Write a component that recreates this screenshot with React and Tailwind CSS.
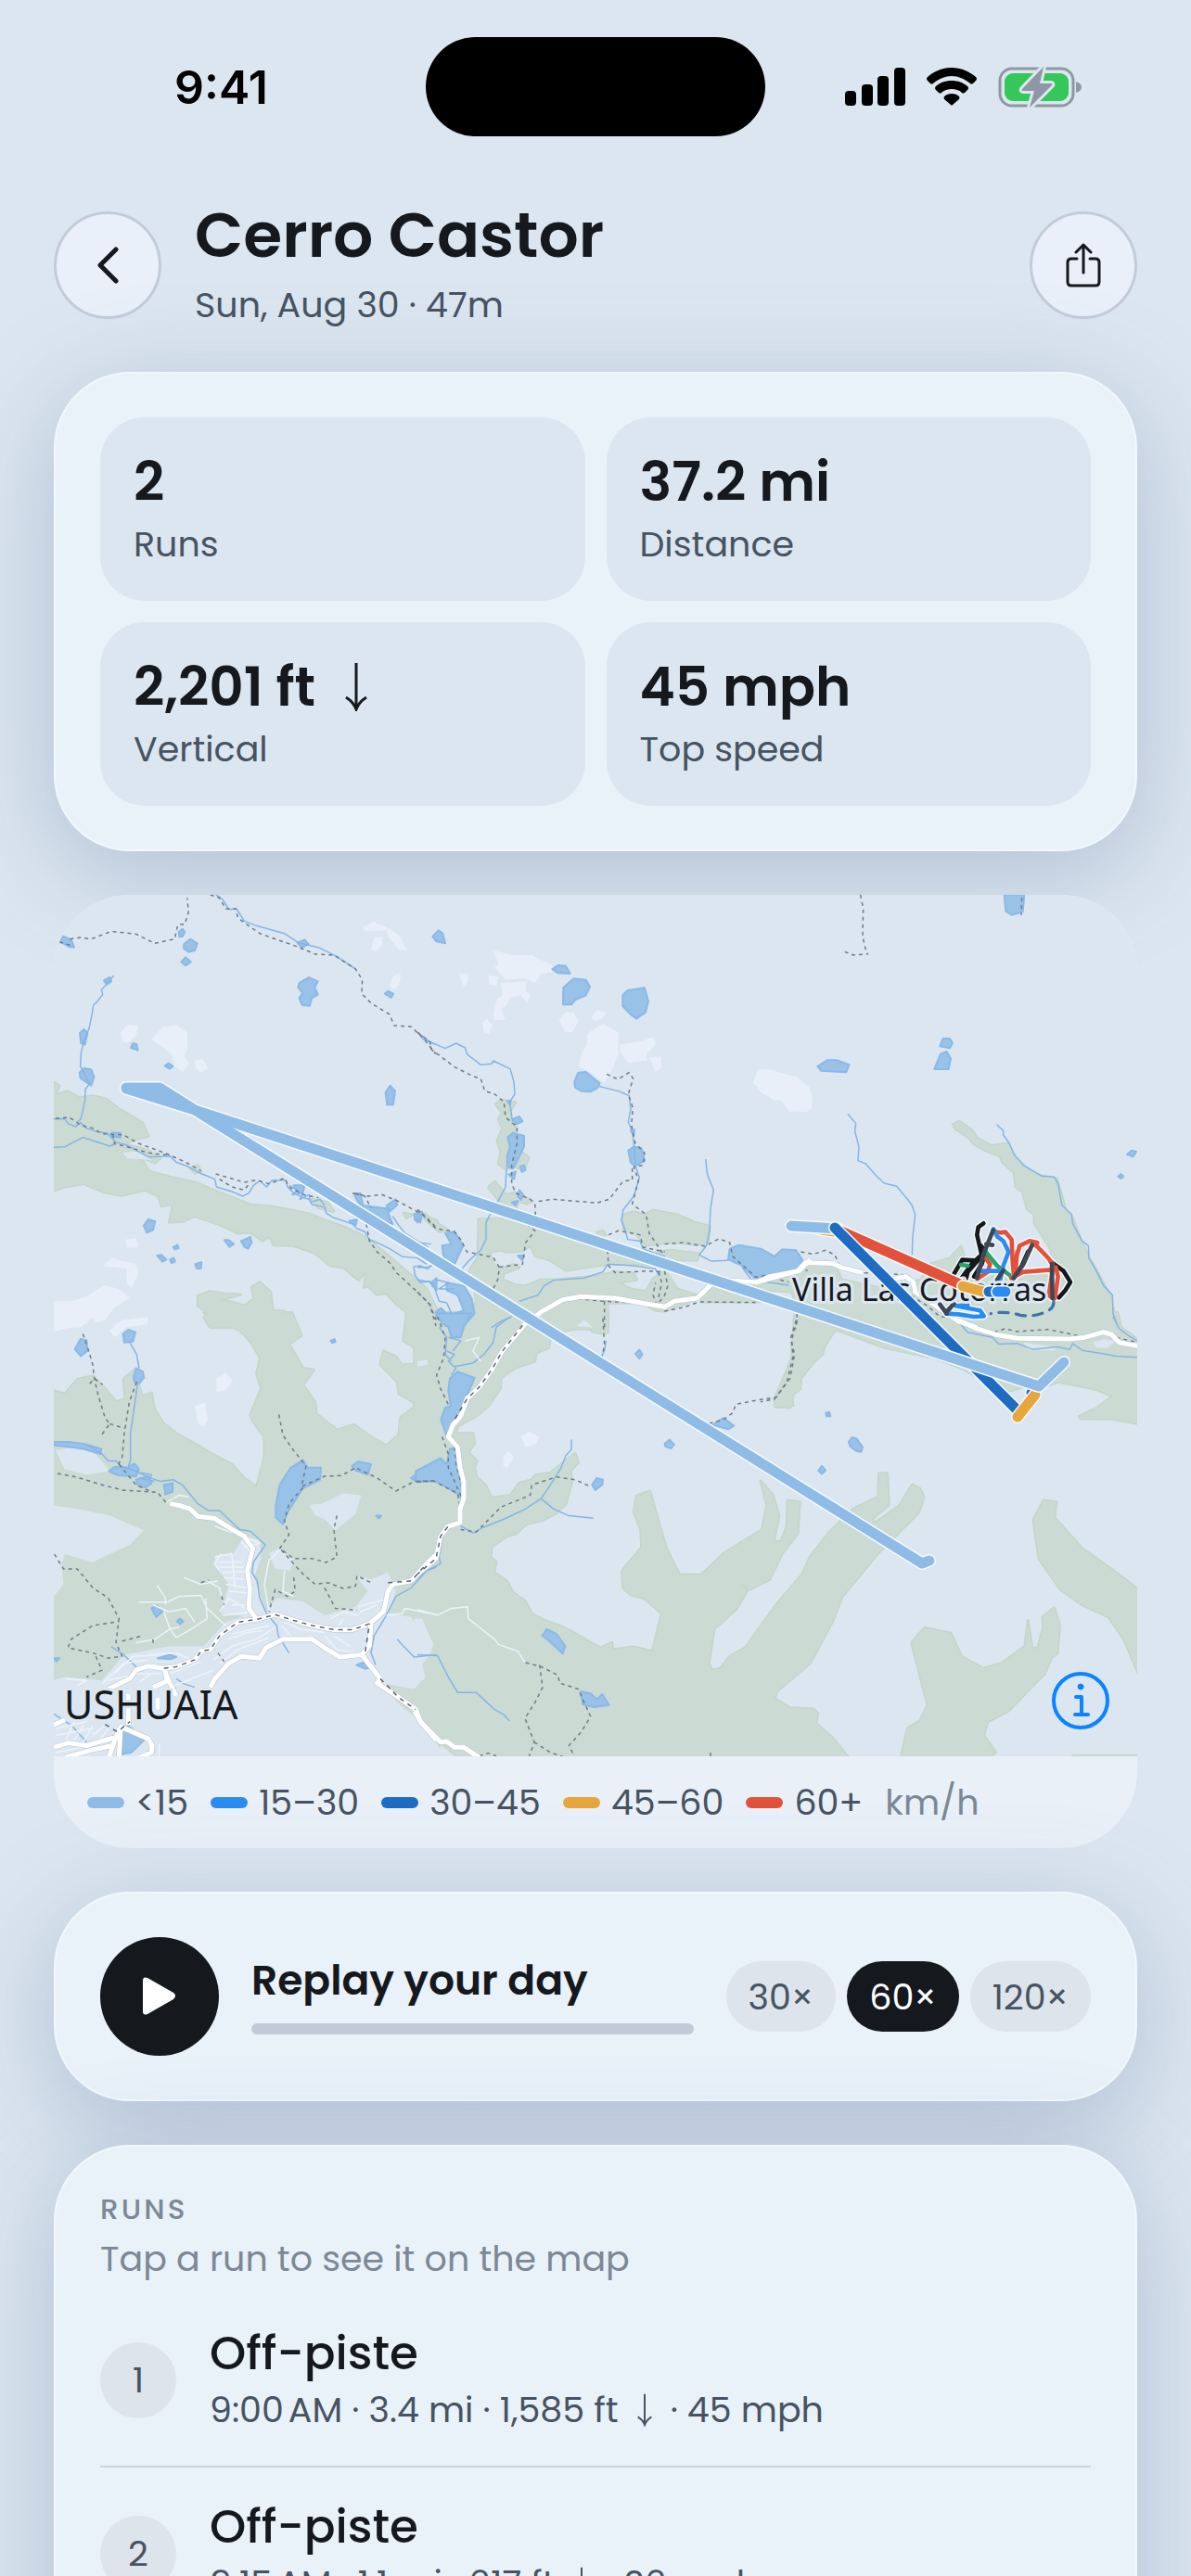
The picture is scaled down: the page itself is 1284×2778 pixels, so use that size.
import React, { useState } from 'react';

const stats = [
  { value: '2', label: 'Runs' },
  { value: '37.2 mi', label: 'Distance' },
  { value: '2,201 ft', label: 'Vertical', down: true },
  { value: '45 mph', label: 'Top speed' },
];

const legend = [
  { label: '<15', color: 'bg-[#8fbce6]' },
  { label: '15–30', color: 'bg-[#2a8cf0]' },
  { label: '30–45', color: 'bg-[#1e6dc3]' },
  { label: '45–60', color: 'bg-[#e6a63c]' },
  { label: '60+', color: 'bg-[#e2523b]' },
];

const runs = [
  { id: 1, name: 'Off-piste', start: '9:00\u202fAM · 3.4 mi · 1,585 ft', speed: '45 mph' },
  { id: 2, name: 'Off-piste', start: '9:15\u202fAM · 1.1 mi · 617 ft', speed: '26 mph' },
];

const speeds = ['30×', '60×', '120×'];

// Each tile draws in its own units and is placed on the map by its transform.
const tiles = [
  {
    transform: 'translate(50 950) scale(.3333)',
    forest:
      'M20 648L42 664 28 692 70 681 108 702 150 695 192 705 232 736 265 755 312 784 330 826 290 836 250 850 330 872 368 898 350 912 318 898 290 888 244 878 248 890 312 905 332 940 400 958 480 975 540 1000 604 1025 660 1048 722 1052 790 1065 852 1078 900 1098 960 1118 1024 1148 1080 1190 1150 1250 1230 1320 1270 1400V1445H1185L1168 1410 1160 1390 1132 1370 1100 1335 1068 1338 1040 1310 1028 1315 1035 1258 1010 1292 962 1252 918 1245 870 1205 800 1180 735 1178 722 1150 700 1165 660 1138 620 1140 560 1112 480 1085 440 1102 397 1104 410 1045 372 1052 362 1020 320 1000 242 1018 180 1005 122 980 60 990 20 1003ZM490 1342L530 1328 580 1336 628 1338 560 1358 600 1362 640 1375 672 1352 664 1315 690 1298 725 1330 733 1390 768 1392 750 1425 800 1445H530L510 1412 525 1398 490 1375ZM465 930L490 920 500 940 480 945ZM860 1030L910 1040 930 1070 880 1058ZM1155 1075L1185 1080 1165 1090ZM1225 1085L1265 1100V1120Z',
    clear: 'M246 880L300 874 340 904 300 900 262 898Z',
    snow:
      'M1022 150L1060 132 1100 150 1140 175 1168 225 1140 222 1105 180 1100 160 1030 162ZM1050 220L1062 182 1085 182 1088 205 1065 230ZM1110 345L1120 310 1145 295 1145 320 1130 350ZM240 492L262 464 298 468 290 500 262 526 248 520ZM340 512L375 474 420 466 455 490 456 545 445 565 462 590 440 620 415 600 405 560 385 545ZM480 580L505 576 522 605 500 620 482 605ZM256 1160L290 1155 298 1185 262 1188ZM184 1246L215 1218 240 1230 285 1236 300 1265 275 1318 258 1300 262 1255ZM20 1360L80 1360 130 1345 185 1308 235 1320 270 1350 220 1380 190 1420 160 1430 150 1410 110 1445 20 1450ZM215 1440L250 1420 330 1415 325 1432 270 1440Z',
    lakes:
      'M45 195L52 178 80 190 90 215 70 212ZM428 165L440 155 448 165 440 180 430 180ZM445 205L465 188 488 202 480 225 460 230 444 218ZM436 262L450 247 467 262 450 274ZM186 322L205 312 210 325 195 335ZM108 492L122 480 133 492 125 530 112 525ZM107 620L122 606 145 610 154 635 145 662 110 638ZM273 540L280 526 292 528 296 548ZM383 598L395 590 410 600 398 608ZM812 200L835 190 848 205 825 216ZM818 330L848 312 878 325 868 345 878 368 858 380 852 404 828 402 818 380 828 362 814 345ZM1095 365L1105 357 1122 365 1115 378ZM1250 180L1262 168V195ZM1097 685L1112 662 1128 680 1122 724 1102 724ZM315 1115L330 1095 352 1102 345 1130 325 1138ZM358 1212L372 1210 388 1225 375 1232ZM400 1225L412 1220 416 1232 404 1236ZM410 1185L424 1178 428 1188 415 1192ZM482 1240L502 1234 500 1254 486 1254ZM576 1162L590 1162 606 1175 592 1184ZM630 1165L660 1152 664 1170 652 1190 640 1184ZM800 985L835 985 830 1010 808 1005ZM995 1012L1015 1010 1025 1050 1100 1060 1120 1110 1085 1100 1040 1075 1005 1035ZM1100 1050L1130 1030 1135 1048 1110 1070ZM1190 1078L1215 1070 1210 1105 1192 1098ZM210 815L240 815 240 830 212 828ZM980 1100L1005 1095 1000 1115ZM1245 1300L1262 1285V1325Z',
    rivers:
      'M218 306L190 340 178 352 182 368 160 395 152 402 148 430 138 478 120 520 112 560 110 600 140 655 126 675 125 710 112 770 100 780M20 770L60 770 70 785 95 795 110 782 130 800 165 812 195 815 225 845 260 855 330 893 400 890 420 910 460 925 490 942 520 955 545 965 550 990 600 1005 635 1020 655 1010 670 985 690 970 712 990 730 968 775 968 780 990 800 1010 830 1025 850 1030 860 1048 900 1055 905 1075 930 1090 960 1100 990 1110 1005 1125 1030 1135 1045 1160 1080 1175 1110 1190 1150 1215 1200 1220 1230 1240M24 862L60 860 118 830 150 840 205 858 225 850M548 44L570 60 590 92 615 90 640 130 680 145 770 170 815 200 880 215 940 245 1000 285M1120 1085L1140 1115 1160 1140 1200 1165 1235 1185M1188 1248L1210 1245 1232 1256 1245 1245M1188 1248L1192 1275 1210 1300 1240 1295 1250 1315M1215 510L1260 530M785 985L815 1000 795 1015 830 1010 820 1030 850 1015 855 1040 885 1030 900 1050',
    trails:
      'M42 198L85 210M76 188L110 183 145 188 210 163 290 172 350 202 415 188 425 142 448 140 460 100 455 55M530 45L560 55 580 90 612 90 620 120 650 142 690 170 760 195 810 212 870 237 930 240 1000 285 1022 320 1020 365 1050 395 1110 432 1125 468 1180 472 1220 510 1260 560M30 768L75 765 110 790 150 800 180 818 250 822 300 850 350 868 395 885 450 910 500 938M215 820L220 850 260 860 330 880 400 888M548 948L640 975 680 968 720 980 770 962 785 990 830 1015 880 1025M560 965L600 990 640 1000 660 975M990 1010L1040 1020 1085 1015 1135 1035 1190 1065 1220 1080 1260 1120M1000 1012L1030 1020 1050 1058M1035 1110L1045 1165 1070 1200 1110 1235 1135 1270 1200 1330 1240 1370 1260 1420',
  },
  {
    transform: 'translate(450 950) scale(.3333)',
    forest:
      'M252 722L275 708 318 716 300 745 302 790 322 800 292 835 290 900 305 930 282 930 262 915 270 880 258 840 275 800 262 770 275 750ZM325 905L342 880 360 895 345 935 315 925ZM230 992L250 972 272 998 285 1015 320 1008 372 1036 355 1044 325 1035 320 1065 262 1032ZM198 1095L330 1090 560 1165 780 1222 775 1245 720 1240 620 1240 480 1260 430 1228 380 1212 365 1180 340 1198 290 1200 270 1195 232 1200 250 1250 285 1250 310 1240 330 1250 280 1270 275 1290 320 1308 350 1310 400 1290 450 1290 580 1278 640 1265 700 1270 710 1290 650 1300 690 1320 740 1328 760 1290 800 1262 820 1290 840 1320 905 1340 900 1355 800 1392 770 1390 730 1366 615 1366 616 1450H150L190 1360 185 1320 160 1300 168 1260 195 1220ZM665 1080L700 1070 735 1080 762 1065 840 1080 900 1105 946 1118 940 1172 900 1178 830 1168 795 1172 740 1180 705 1140 668 1130ZM775 1200L820 1195 910 1205 905 1228 780 1225ZM580 1138L600 1132 610 1145 592 1150ZM918 1350L960 1310 1000 1320 1108 1362 920 1362ZM1090 1310L1190 1282 1265 1278V1300L1180 1312 1100 1325ZM20 1075L60 1105 100 1130 70 1135 20 1090ZM-5 1325L40 1390 70 1450H-5Z',
    clear: 'M515 1440L540 1420 568 1445Z',
    snow:
      'M245 225L310 240 370 240 440 275 435 295 400 300 380 330 345 315 285 320 250 280 262 270ZM270 330L355 325 350 355 364 370 355 395 335 370 300 378 290 400 270 415 285 450 250 450 245 430 255 385 275 370ZM230 305L262 310 255 340 232 335ZM135 300L165 300 165 320 150 346ZM210 460L225 446 242 468 232 494 215 490ZM458 450L480 425 505 425 520 455 500 490 480 490ZM562 440L580 418 610 425 600 445 572 452ZM548 495L600 462 650 490 650 560 630 610 605 655 560 620 522 600 530 560 548 530ZM655 530L720 520 765 505 770 530 740 560 745 580 680 588 655 550ZM750 570L788 568 790 605 770 618ZM1085 655L1100 615 1130 610 1210 630 1262 665V748L1205 745 1175 710 1150 708Z',
    lakes:
      'M50 180L68 160 82 170 90 202 60 195ZM436 285L455 273 480 275 494 300 455 298ZM472 345L505 316 545 320 558 342 545 370 510 385 498 400 471 400ZM664 370L680 354 735 346 747 390 738 425 708 446 690 432 664 405ZM508 650L520 620 545 618 590 655 582 670 560 682 530 680 510 668ZM682 872L700 860 725 865 735 905 705 922 690 912ZM310 770L330 762 340 778 318 788ZM292 830L310 815 345 825 345 860 325 900 310 930 290 925 290 890 300 860ZM332 925L345 920 350 935 338 942ZM305 1040L325 1035 318 1050ZM330 1000L342 1015 335 1032 325 1020ZM1010 1190L1040 1178 1110 1190 1155 1215 1180 1192 1225 1195 1245 1225 1232 1262 1170 1275 1090 1285 1050 1245 1005 1225ZM90 1140L120 1135 148 1180 120 1240 85 1220 80 1180 110 1175ZM0 1075L15 1080 0 1105ZM60 1395L75 1382 90 1395 82 1420 62 1415ZM95 1300L150 1310 175 1350 185 1400 150 1440H90L120 1400 150 1390 130 1340 95 1325ZM325 1212L345 1212 340 1228ZM295 950L318 940 312 965ZM690 808L702 805 700 825ZM290 712L302 712 300 724Z',
    rivers:
      'M0 490L40 520 90 542 125 525 155 540 160 560 205 595 240 592 245 582 300 608 312 650 315 690 298 715 308 780M288 930L285 990 262 1035 232 1085 222 1105 222 1160 205 1195 165 1230 145 1255M588 665L650 680 685 695 690 740 682 780 695 810 700 850 705 920 718 960 700 1020 665 1065 660 1100 672 1130 680 1160 720 1165 730 1190 770 1205 800 1215M932 900L938 950 958 1000 948 1060 945 1130 935 1180 912 1210 950 1230 1005 1228M615 1240L600 1265 540 1285 440 1292 410 1310 390 1340 330 1360M305 1410L270 1425 240 1445M0 1250L30 1250 60 1240M615 1240L700 1245 770 1255 780 1275M0 1290L50 1300 60 1330 70 1360 95 1365 110 1400M1050 1250L1080 1290 1200 1308M0 1170L45 1175M60 1290L100 1300 70 1320 120 1320',
    trails:
      'M0 490L40 520 45 545 120 602 180 632 205 640 218 680 250 690 280 715 285 765 322 795 322 850 305 920 305 980 318 1010 365 1030 380 1045 382 1080M612 625L648 642 685 620 698 640 682 690 697 735 692 790 705 850 735 880 730 920 700 925 715 970 695 1045 740 1080 750 1140 800 1215M695 930L695 968 665 972 620 1030 580 1042 440 1030 380 1038M618 1145L650 1132 720 1145 730 1185 800 1200M615 1195L618 1245 640 1268 740 1262 800 1265 810 1310 800 1340 775 1372 762 1340 770 1300M800 1175L860 1170 930 1182 975 1158 1010 1170 1020 1215 1095 1282 1190 1265 1262 1260M355 1110L380 1132 350 1170 340 1240 265 1250 260 1290 245 1320M265 1250L245 1218 160 1200 140 1160 120 1135 60 1125 0 1062M385 1400L470 1360 520 1352 600 1360 770 1368 800 1392 860 1380 912 1362 1100 1364M605 1360V1450M1228 1400L1225 1450M780 1265L790 1300 780 1350M1150 1285L1200 1298M0 1330L40 1370 60 1440',
    roads: 'M340 1440L400 1395 470 1355 530 1345 640 1350 740 1368 800 1378 830 1360 905 1350 950 1305 990 1292 1100 1298 1140 1280 1235 1262 1270 1225',
  },
  {
    transform: 'translate(820 950) scale(.3333)',
    forest:
      'M622 788L642 778 682 805 700 832 745 856 800 850 822 892 870 938 910 955 958 962 990 1072 1005 1080 1040 1170 1060 1215 1088 1262 1130 1340 1158 1450H110L122 1380 100 1330 0 1322V1300L100 1272 150 1242 240 1242 262 1290 400 1320 520 1290 552 1238 612 1222 648 1182 658 1215 680 1270 880 1280 950 1250 938 1190 885 1108 885 1078 862 1062 848 1005 825 990 820 945 782 910 775 890 740 878 690 852 672 830 630 802Z',
    snow: 'M-10 610L40 612 80 630 115 632 160 670 168 710 165 738 95 748 65 708 20 695-10 678Z',
    lakes:
      'M788 44H853L848 100 812 110 793 98ZM580 535L590 510 612 510 621 525 612 541ZM562 609L582 560 602 552 615 575 608 609ZM184 600L215 580 245 580 286 595 277 619 195 614ZM1185 885L1200 872 1215 876 1205 892ZM1156 956L1165 948 1174 956 1166 964Z',
    rivers:
      'M282 754L308 785 305 810 318 860 315 905 340 915 375 955 400 978 440 988 475 1030 490 1050 500 1080 492 1150 490 1210M763 788L785 808 785 822 805 850 820 885 850 920 910 955 950 958 962 980 975 1050 1005 1078 1010 1110 1040 1165 1060 1180 1062 1220 1085 1260 1110 1310 1138 1340 1140 1400 1155 1440',
    trails:
      'M323 45L332 90 330 180 342 230 348 238M272 229L300 240 348 236M845 55L843 110M130 1200L170 1208 210 1195 240 1210 258 1250 330 1268 400 1270 470 1275 500 1300 490 1345 540 1375 580 1410 610 1412',
    roads: 'M-20 1300L120 1262 145 1235 235 1238 260 1250 330 1268 M420 1290L470 1280 495 1300 500 1330 560 1370 640 1425 700 1445',
  },
  {
    transform: 'translate(50 1420) scale(.3333 .37)',
    forest:
      'M510-12H795L825 55 785 80 830 150 865 155 830 200 870 250 872 282 940 330 995 315 1050 350 1100 375 1140 345 1145 295 1200 255 1140 225 1135 190 1080 140 1090 100 1130 115 1150 140 1190 138 1235 130 1210 100 1155 70 1165-12H1270V1290H20V215L60 225 100 182 150 172 190 210 225 248 255 240 250 180 285 155 310 232 340 222 350 270 380 312 420 340 480 370 540 402 600 430 640 470 680 495 705 410 705 350 668 305 660 285 695 210 680 165 692 120 665 80 640 50 580 15Z',
    clear:
      'M20 550L100 560 205 580 315 622 270 665 190 698 150 716 60 692 50 720 55 780 20 820ZM850 548L890 545 960 515 1018 520 1000 575 935 622 900 590 870 580ZM720 690L750 675 800 705 790 740 740 735ZM30 390L100 378 160 400 205 450 130 460 60 445ZM20 1060L60 1050 180 1060 250 985 400 960 510 960 580 890 640 872 565 865 590 780 540 720 550 695 605 690 640 640 690 650 695 700 672 760 712 860 745 820 830 830 900 870 1000 845 1040 800 1000 755 1050 765 1105 745 1130 800 1110 865 1180 875 1220 930 1245 950 1215 1010 1225 1050 1190 1085 1100 1070 1130 1120 1210 1180 1275 1260V1300H20Z',
    snow: 'M550 180L580 162 602 185 580 215 550 218ZM480 260L512 250 522 300 510 322 490 310ZM20-10H150L130 20 80 30 20 45ZM205 40L250 10 330 0 325 22 260 30 220 60Z',
    lakes:
      'M92 95L110 65 130 68 132 100 112 115ZM248 50L265 38 288 45 280 72 252 75ZM282 175L290 150 312 160 316 178 300 195 285 190ZM20 365H70L120 370 178 385 175 400 120 385 60 378 20 375ZM202 450L220 438 260 440 285 428 300 445 290 465 230 462ZM290 475L330 465 340 485 320 498 295 490ZM380 490L408 485 408 510 385 518ZM742 550L755 490 790 440 830 418 845 440 888 440 885 475 830 500 780 570 765 605 742 585ZM988 435L1010 422 1050 430 1040 460 1000 448ZM1180 470L1200 455 1262 435V478L1200 482ZM340 850L358 842 375 860 355 875ZM422 888L432 880 443 888 432 895ZM245 1275L240 1200 265 1192 318 1232 275 1270ZM1003 1015L1025 1008 1058 1022 1030 1026ZM360 995L400 985 420 992 400 998ZM24 995L42 995 32 1005ZM920 70L932 65 935 73 925 76ZM1066 580L1082 580 1076 588Z',
    rivers:
      'M268 72L292 110 300 150M295 195L285 260 272 340 272 420 265 435M130 372L180 400 200 420 225 420 240 435 290 450 330 468 370 480 410 475 440 490 490 545 525 565 560 565 625 620 660 625 708 665 670 715 665 745 682 770 690 820 712 865 745 900 750 930 785 980M1262 730L1230 740 1180 790 1130 815 1100 870 1060 930 1050 980 1065 1015M1135 940L1155 960 1190 992 1262 985M210 962L250 985 290 1020M420 1055L445 1070 480 1080M24 1158L80 1190 130 1240M300 455L340 460 330 480M300 470L350 480',
    trails:
      'M118 50L132 85 150 140 155 180 168 230 190 295 205 312 190 330 175 350M205 312L252 325M140 195L155 180 182 198M292 190L268 250 252 340 245 410 230 435M36 457L100 468 180 490 250 506 360 512 390 545M235 430L290 490 345 512M752 285L765 345 800 390 840 435 825 495 900 465 955 463 1000 440 1070 470 1130 508 1190 480 1262 478M830 498L785 545 770 595 785 635 755 675 800 705 860 705 905 716 940 700 930 620 942 570M760 680L830 750 870 780 910 775 960 792 1000 785 1005 755 1050 775M900 790L935 850 1005 855M800 760L805 800 780 815 740 795 720 860M26 692L55 735 100 735 150 790 200 820 235 880 225 950 245 990 200 995 150 980 70 965 80 940 150 900 235 888M160 990L180 1030 130 1050M245 945L310 930M555 980L575 1005M570 825L565 810 575 840M500 775L525 768M345 940V960',
    streets:
      'M300 832L390 832 430 815 500 812 520 850 580 900M358 782L385 820 385 838M445 760L500 780 555 770M380 860L400 910 420 935 470 910 520 880 515 820M345 840L395 860 450 850 480 890M290 950L350 940 400 910 430 905M545 700L600 690 610 790M560 715H630M560 730H640M570 745L650 742M575 760L640 765M580 780L650 790M590 800L650 805M560 860L590 820 660 860M600 840L650 840M570 870L650 862M565 690L545 720 560 740M520 770L560 790 570 830M540 1000L600 960 680 940 740 905M560 1010L620 970 720 935M590 940L650 920 700 915M600 925L720 900M760 900L800 940 860 930M770 890L820 910 900 920M900 930L940 970 1000 980M930 930L980 960M920 880L960 860 1010 870M1010 845L1090 825M1015 860L1070 840M940 910L960 880M720 860L705 780 720 710 755 680M770 740L765 800 800 815M1100 870L1150 865 1160 850 1262 868M180 1070L250 1010 330 1000M200 1060L300 1040 370 1040M220 1040L280 990 370 985M330 985L420 980 470 1000M300 1065L340 1040M400 1040L500 1005M415 1075L540 1030M60 1055L130 1060 100 1075M30 1200L130 1180M30 1220L150 1200M60 1240L90 1180M90 1235L120 1190M120 1240L150 1190M150 1220L190 1190M160 1250L200 1200M30 1270L200 1240M365 1245V1285M640 640L690 660 640 670M545 610L600 630M630 655L665 690M390 540L430 520 460 525',
    roads:
      'M400 545L430 550 465 560 490 582 545 588 600 620 640 640 668 675 650 740 658 790 655 850 680 882M380 1025L420 1020 480 1000 500 975 530 970 560 930 620 890 680 882 740 868 800 885 860 900 930 912 990 912 1045 895 1090 860 1105 800 1120 780 1180 770 1230 720 1265 690M530 1080L545 1055 590 1010 630 990 690 995 710 965 765 940 860 940 900 965 950 992 1020 985 1045 960 1050 895M1020 985L1080 1055 1070 1068 1140 1110 1195 1145 1210 1180 1262 1235M200 1085L270 1055 290 1030 330 1018 380 1025 395 1060 420 1105M345 1080L390 1062 385 1035M24 1255L70 1242 130 1250 225 1225 240 1195 330 1230 342 1250 340 1270 300 1285M60 1285L150 1262 215 1250M225 1225L200 1290M240 1195L235 1285M24 1190L60 1175M265 1100V1190M360 1110V1145',
    dotted: 'M380 1025L420 1020 480 1000 500 975 530 970 560 930 620 890 680 882 740 868 800 885 860 900 930 912 990 912 1045 895 1030 985M1080 1055L1140 1110 1195 1145M1105 775L1180 770 1230 720M190 1188L230 1210 270 1180',
  },
  {
    transform: 'translate(450 1420) scale(.3333 .37)',
    forest:
      'M-10-12H616V45L590 48 565 42 570 25 545 18 500 38 470 42 430 65 425 90 385 105 380 130 320 148 290 165 270 180 268 210 230 260 190 290 130 320 125 340 180 340 185 370 165 395 192 420 185 440 190 465 220 490 240 528 300 520 330 485 370 475 380 462 430 455 510 398 520 425 495 450 500 480 480 545 450 572 400 595 350 605 320 632 290 640 240 670 238 700 255 715 248 745 290 770 310 805 350 830 370 865 410 885 460 900 500 918 590 965 630 950 630 970 700 962 760 975 790 865 735 822 690 810 665 790 662 740 725 672 722 620 700 570 708 522 752 508 805 675 848 752 918 752 990 690 1115 620 1130 550 1110 478 1150 520 1170 580 1152 655 1175 655 1195 612 1197 535 1237 540 1230 632 1180 690 1140 765 1075 795 1045 780 1065 800 1032 852 960 910 943 1010 953 1030 980 1025 1010 990 1060 965 1160 840 1245 750 1270 700 1330 630 1410 560 1490 525 1493 457 1520 457 1525 548 1470 590 1482 600 1560 550 1600 490 1625 500 1638 525 1622 570 1490 690 1375 815 1342 890 1270 1010 1165 1090 1155 1112 1205 1140 1280 1143 1295 1155 1290 1185 1340 1225 1400 1290H140L60 1230 0 1175-10 1160ZM1228-10L1212 120 1155 240 1158 262 1205 265 1215 235 1212 222 1240 200 1240 180 1275 140 1300 110 1350 40V-10Z',
    clear: 'M-10 880H15L52 955 40 985 10 1020 25 1055-10 1075ZM0 130L30 125 35 140 0 145Z',
    snow: 'M335 350L360 335 395 350 385 370 350 380ZM278 410L295 390 312 410 290 440 278 435Z',
    lakes:
      'M60-10H175L150 30 140 60 110 60 100 30 80 20ZM105 180L130 160 185 178 165 220 150 270 120 300 95 350 76 300 90 265 108 260 100 215ZM105 385L125 380 145 450 145 530 120 510 60 480-5 478V450L75 412 95 430ZM565 490L580 470 600 475 598 490 575 505ZM800 370L815 358 830 372 820 384 802 378ZM705 108L718 96 728 110 718 122ZM955 315L990 295 1024 318 1005 328ZM404 930L418 910 450 925 478 960 470 982 420 940ZM528 1092L560 1098 580 1115 598 1100 620 1132 570 1138 535 1130Z',
    rivers:
      'M300 0L255 30 245 75 215 110 180 135 120 145M498 358L498 388 480 405 465 440 430 490 400 530 350 560 280 590 210 615 180 630 140 610M400 530L440 560 490 580 570 587M95 100L120 110 100 130 125 150 110 170M85 625L70 700 75 720 20 745 0 770M0 985L65 988 100 1050 130 1095 190 1095 250 1145 280 1160 298 1178M610 70L605 100 595 115M70 30L95 60 90 110 110 130M100 60L140 70 115 100',
    trails:
      'M65 0L90 60 85 120 62 170 75 210 105 265M80 350L100 400 100 440 140 520 140 590M120 380L125 430 145 500M0 482L50 478 130 515 145 590 100 610M140 620L190 628 270 555 365 520 370 490 450 467 510 475 560 495M600 5L605 80 598 115M350 1008L400 1020 455 1045 460 1068 520 1085 560 1165 530 1210 490 1250 510 1285M395 1015L405 1080 380 1125 348 1170 378 1240 360 1285M378 1240L430 1270 480 1285M200 1280L230 1272 255 1280M1228 10L1210 70 1220 110 1205 180 1160 235 1100 243 1030 255 1020 280 990 300 940 312M948 1270V1285',
    streets: 'M0 853L65 870 110 850 162 845 165 880 250 940 262 955 325 975 348 1008M155 70L200 60 180 100 205 130',
    roads: 'M345 25L275 100 240 155 200 205 160 240 140 290 115 315 100 350 130 380 138 440 150 480 150 530 138 560 138 600 98 612 75 640 60 705 0 750M-10 1150L15 1185 75 1240 95 1238 120 1255 150 1255 200 1285',
    dotted: 'M340 25L275 100 240 155 200 205 160 240 120 300M98 612L75 640 60 705 0 750',
  },
  {
    transform: 'translate(820 1420) scale(.3333 .37)',
    forest:
      'M110-12H1155L1165 30 1222 68V225L1140 232 1085 212 1050 205 960 190 930 200 850 205 800 218 790 200 720 185 650 150 560 120 400 90 245 38 210 70 200 110 160 140 125 180 128 210 100 230 105 258 50 262 60 230 100 120ZM453 1290L475 1200 515 1178 540 1132 488 950 530 907 615 922 650 990 720 1025 780 1010 855 960 865 885 878 965 895 968 915 905 912 875 950 848 968 900 960 980 940 995 920 1040 800 1150 735 1180 722 1220 760 1270 730 1290ZM915 535L958 540 950 585 1040 675 1150 745 1222 795V1040L1175 940 1125 875 1040 840 970 795 900 705 882 592ZM1030 290L1090 265 1140 230 1222 225V312L1140 298 1035 297ZM1010 1280H1222V1290H1010Z',
    clear: 'M1075 75L1110 65 1150 70 1120 92 1085 90ZM850 75L960 90 950 98 870 98Z',
    lakes: 'M285 365L295 352 310 355 330 380 325 394 310 392 290 378ZM187 448L198 435 210 448 198 458ZM211 280L222 278 226 290 213 290Z',
    rivers: 'M640 15L670 45 750 60 770 80 830 78 880 95 960 88 1000 95 1010 78 1040 98 1110 108 1150 115 1220 118M1140 0L1160 35 1190 55 1218 70',
    trails: 'M115 10L98 60 105 115 85 190 45 240 0 248M755 45L790 35 830 43 930 37 990 48 1040 58 1110 42 1150 60 1218 75',
    roads: 'M640 10L700 35 760 52 830 63 1000 65 1050 60 1110 45 1135 52 1160 75 1220 85',
  },
];

const layers = [
  ['forest', { fill: 'none', stroke: '#c4d6c8', strokeWidth: 3 }],
  ['forest', { fill: '#cbdad3' }],
  ['clear', { fill: '#dce6f0' }],
  ['snow', { fill: '#e8eff8' }],
  ['lakes', { fill: '#98c2e8', stroke: '#8ab9e8', strokeWidth: 2 }],
  ['rivers', { fill: 'none', stroke: '#83b5e8', strokeWidth: 1.5 }],
  ['streets', { fill: 'none', stroke: '#edf3fa', strokeWidth: 1.5 }],
  ['trails', { fill: 'none', stroke: '#717b87', strokeWidth: 1.5, strokeDasharray: '4 4' }],
  ['roads', { fill: 'none', stroke: '#b9c4d0', strokeWidth: 6 }],
  ['roads', { fill: 'none', stroke: '#ffffff', strokeWidth: 5 }],
  ['dotted', { fill: 'none', stroke: '#59636f', strokeWidth: 1.5, strokeDasharray: '5 5' }],
];

const pistes = [
  ['#15191e', 'M181 58L164 70 160 95 168 130 175 160 195 165M172 130L188 150 175 190 150 230M180 155L155 178 112 176 85 222 M150 180L110 235M165 175L130 215 125 235M398 182L440 212 462 248 445 275 425 298M325 150L305 195 285 225'],
  ['#e2523b', 'M215 84L235 88 252 86 272 110 275 180 280 235M285 175L298 130 330 115 355 120 350 130M350 128L390 170 405 190M285 205L290 150M188 170L202 190 195 215 160 238M270 235L310 215 400 208 M415 200L422 230 412 300M405 200L400 240 392 290 408 303'],
  ['#28a26b', 'M190 152L225 195 265 225M108 192L130 195'],
  ['#2a8cf0', 'M213 76L225 100 245 115 262 150 245 195 235 240M165 212H245M75 330L60 350 100 352 150 360 182 358 170 340 90 325 130 322'],
  ['#3d4854', 'M212 80L180 160 160 235M338 128L310 190 278 235M402 190L404 300M245 210L225 240M40 320L62 350M190 125L210 128M60 345L85 318'],
];

const tracks = [
  ['#e6a63c', 'M885 1326L913 1330'],
  ['#8fbce6', 'M853 1322L903 1325'],
  ['#e2523b', 'M905 1327L1033 1384'],
  ['#e6a63c', 'M1038 1387L1060 1393'],
  ['#1e6dc3', 'M1066 1393H1074'],
  ['#2a8cf0', 'M1075 1393H1084'],
  ['#1e6dc3', 'M900 1324L1096 1520M1117 1497L1112 1502'],
  ['#e6a63c', 'M1097 1528L1116 1504'],
  ['#8fbce6', 'M136 1173H172L210 1197 994 1686 1002 1683M136 1174L210 1197 1120 1495 1147 1469M150 1177L190 1184'],
];

const SkiMap = () => (
  <svg viewBox="58 965 1168 929" className="block w-full" role="img" aria-label="Route map">
    {layers.map(([layer, style], i) => (
      <g key={i} {...style} strokeLinejoin="round">
        {tiles.map((tile) =>
          tile[layer] ? (
            <g key={tile.transform} transform={tile.transform}>
              <path d={tile[layer]} vectorEffect="non-scaling-stroke" />
            </g>
          ) : null
        )}
      </g>
    ))}

    <g transform="translate(1000 1300) scale(.3333)" fill="none" strokeLinecap="round" strokeLinejoin="round">
      {pistes.map(([color, d]) => (
        <path key={color} d={d} stroke="#f4f8fc" strokeWidth="23" />
      ))}
      {pistes.map(([color, d]) => (
        <path key={color} d={d} stroke={color} strokeWidth="14" />
      ))}
      <path d="M408 312Q408 335 380 345Q345 362 300 355Q250 340 205 350" stroke="#3a76ad" strokeWidth="10" strokeDasharray="30 26" />
    </g>

    <g
      className="font-['Noto_Sans',sans-serif]"
      fill="#15191e"
      stroke="#dce6f0"
      strokeWidth="6"
      strokeLinejoin="round"
      paintOrder="stroke"
    >
      <text x="854" y="1403" fontSize="34">Villa Las Cotorras</text>
      <text x="69" y="1854" fontSize="43">USHUAIA</text>
    </g>

    <g fill="none" strokeLinecap="round" strokeLinejoin="round">
      {tracks.map(([color, d]) => (
        <React.Fragment key={d}>
          <path d={d} stroke="#f6fafd" strokeWidth="14" />
          <path d={d} stroke={color} strokeWidth="11" />
        </React.Fragment>
      ))}
    </g>
  </svg>
);

const DownArrow = ({ className }) => (
  <svg viewBox="0 0 24 52" className={className} fill="none" stroke="currentColor" strokeWidth="3" role="img" aria-label="down">
    <path d="M12 0V49M1 37Q9 42 12 50Q15 42 23 37" />
  </svg>
);

const StatusBar = () => (
  <div className="grid grid-cols-[1fr_366px_1fr] items-center pt-10">
    <div className="pl-[188px] text-[50px] leading-none font-semibold text-black font-[Inter,sans-serif]">9:41</div>
    <div className="h-[107px] rounded-full bg-black" />
    <div className="flex items-center gap-[22px] pl-[86px]">
      <svg viewBox="0 0 65 41" className="w-[65px] h-[41px]" fill="#000">
        <rect x="0" y="25" width="12" height="16" rx="4" />
        <rect x="18" y="18" width="12" height="23" rx="4" />
        <rect x="35" y="9" width="12" height="32" rx="4" />
        <rect x="53" y="0" width="12" height="41" rx="4" />
      </svg>
      <svg viewBox="0 0 56 41" className="w-14 h-[41px]" fill="#000">
        <path d="M28 0C38 0 47 4 54 10Q56 12 54 14L51 17Q49 18 48 17C42 12 35 9 28 9S14 12 8 17Q7 18 5 17L2 14Q0 12 2 10C9 4 18 0 28 0Z" />
        <path d="M28 14C35 14 40 16 45 20Q47 22 45 24L42 27Q40 28 39 27C36 24 32 23 28 23S20 24 17 27Q16 28 14 27L11 24Q9 22 11 20C16 16 21 14 28 14Z" />
        <path d="M28 28C31 28 34 29 36 31Q37 32 36 34L29 40Q28 41 27 40L20 34Q19 32 20 31C22 29 25 28 28 28Z" />
      </svg>
      <svg viewBox="0 0 92 44" className="w-[92px] h-11">
        <rect x="2" y="2" width="79" height="40" rx="13" fill="none" stroke="#8e97a3" strokeWidth="3" />
        <rect x="7" y="7" width="69" height="30" rx="9" fill="#34c759" />
        <path d="M84 16Q90 18 90 22T84 28Z" fill="#8e97a3" />
        <path d="M49 0L26 24Q25 26 27 26H39L34 44L58 20Q59 18 57 18H45Z" fill="#8e97a3" stroke="#dce6f0" strokeWidth="6" paintOrder="stroke" />
      </svg>
    </div>
  </div>
);

const Card = ({ className, children }) => (
  <section
    className={`rounded-[82px] border-2 border-[#f2f7fd] bg-[#e9f1f9] shadow-[0_24px_110px_rgba(90,118,155,0.34)] ${className}`}
  >
    {children}
  </section>
);

const App = () => {
  const [speed, setSpeed] = useState('60×');

  return (
    <div className="h-screen overflow-hidden bg-[#dce6f0] text-[#15191e] font-[Poppins,Inter,sans-serif]">
      <StatusBar />

      <header className="flex items-center gap-9 px-[58px] pt-16 pb-10">
        <button aria-label="Back" className="shrink-0 flex items-center justify-center w-[116px] h-[116px] rounded-full border-3 border-[#c2ccd9] bg-[#e9f0f9]">
          <svg viewBox="0 0 24 40" className="w-6 h-10" fill="none" stroke="currentColor" strokeWidth="5" strokeLinecap="round" strokeLinejoin="round">
            <path d="M21 3L4 20L21 37" />
          </svg>
        </button>
        <div className="flex-1">
          <h1 className="text-[68px] leading-[86px] font-semibold">Cerro Castor</h1>
          <p className="text-[38px] leading-[64px] text-[#475362]">Sun, Aug 30 · 47m</p>
        </div>
        <button aria-label="Share" className="shrink-0 flex items-center justify-center w-[116px] h-[116px] rounded-full border-3 border-[#c2ccd9] bg-[#e9f0f9]">
          <svg viewBox="0 0 38 48" className="w-[38px] h-12" fill="none" stroke="currentColor" strokeWidth="3" strokeLinecap="round" strokeLinejoin="round">
            <path d="M12 17H6Q2 17 2 21V42Q2 46 6 46H32Q36 46 36 42V21Q36 17 32 17H26M19 32V3M11 10L19 2L27 10" />
          </svg>
        </button>
      </header>

      <main className="flex flex-col gap-[47px] px-[58px]">
        <Card className="grid grid-cols-2 gap-[23px] px-12 py-[47px]">
          {stats.map((stat) => (
            <div key={stat.label} className="rounded-[48px] bg-[#dce6f0] px-9 py-8">
              <p className="flex items-center gap-8 text-[58px] leading-[76px] font-semibold">
                {stat.value}
                {stat.down && <DownArrow className="w-6 h-[52px]" />}
              </p>
              <p className="text-[38px] leading-[58px] text-[#475362]">{stat.label}</p>
            </div>
          ))}
        </Card>

        <section className="relative rounded-[82px] overflow-hidden bg-[#e9f0f8]">
          <div className="relative bg-[#dce6f0]">
            <SkiMap />
            <button aria-label="Map info" className="absolute right-[29px] bottom-7 text-[#0a84ff]">
              <svg viewBox="0 0 64 64" className="w-16 h-16" fill="none" stroke="currentColor" strokeWidth="4" strokeLinecap="round" strokeLinejoin="round">
                <circle cx="32" cy="32" r="29" />
                <circle cx="32" cy="17" r="3" fill="currentColor" strokeWidth="1" />
                <path d="M27 28H33V47M26 47H40" />
              </svg>
            </button>
          </div>
          <ul className="flex items-center gap-6 h-[99px] px-9 text-[38px] text-[#475362]">
            {legend.map((item) => (
              <li key={item.label} className="flex items-center gap-3">
                <span className={`w-10 h-3 rounded-full ${item.color}`} />
                {item.label}
              </li>
            ))}
            <li className="text-[#7c8895]">km/h</li>
          </ul>
        </section>

        <Card className="relative flex items-center gap-[35px] px-12 py-[47px]">
          <button aria-label="Play" className="shrink-0 flex items-center justify-center w-32 h-32 rounded-full bg-[#15191e]">
            <svg viewBox="0 0 38 44" className="w-[38px] h-11" fill="#fff">
              <path d="M1 5Q1 0 6 2L34 18Q38 21 34 25L6 41Q1 43 1 38Z" />
            </svg>
          </button>
          <div className="flex-1">
            <h2 className="text-[44px] leading-12 font-semibold whitespace-nowrap">Replay your day</h2>
            <div className="mt-[22px] h-3 rounded-full bg-[#c1cbd7]" />
          </div>
          <div className="flex gap-3">
            {speeds.map((item) => (
              <button
                key={item}
                onClick={() => setSpeed(item)}
                className={`h-[76px] px-6 rounded-full text-[38px] ${
                  item === speed ? 'bg-[#15191e] text-white' : 'bg-[#dde4ec] text-[#475362]'
                }`}
              >
                {item}
              </button>
            ))}
          </div>
        </Card>

        <Card className="relative px-12 pt-[47px] pb-20">
          <h2 className="text-[31px] leading-[40px] font-medium tracking-widest text-[#7c8895]">RUNS</h2>
          <p className="text-[38px] leading-[68px] text-[#7c8895]">Tap a run to see it on the map</p>
          <ul className="mt-1">
            {runs.map((run) => (
              <li key={run.id} className="border-b-2 border-[#cbd5e0]">
                <button className="w-full flex items-center gap-9 h-[185px] text-left">
                  <span className="flex items-center justify-center w-[82px] h-[82px] rounded-full bg-[#dde4ec] text-[38px] text-[#475362]">
                    {run.id}
                  </span>
                  <span className="flex-1">
                    <span className="block text-[50px] leading-[64px] font-medium">{run.name}</span>
                    <span className="flex items-center text-[38px] leading-[58px] text-[#475362]">
                      {run.start}
                      <DownArrow className="mx-5 w-4 h-9" />
                      · {run.speed}
                    </span>
                  </span>
                </button>
              </li>
            ))}
          </ul>
        </Card>
      </main>
    </div>
  );
};

export default App;
